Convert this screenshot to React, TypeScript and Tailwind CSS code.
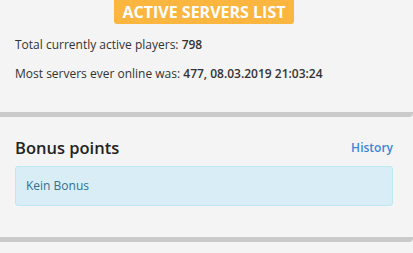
export default function App() {
  return (
    <div className="min-h-[253px] w-[413px] bg-[#f4f4f4] font-['Open_Sans',sans-serif] text-[#333]">
      <section className="h-[117px] border-b-[5px] border-[#cacaca] rounded-br-[4px] pl-[15px] pr-[20px] pb-[1px]">
        <div className="flex justify-center">
          <div className="w-[180px] h-[24px] flex items-center justify-center rounded-b-[3px] bg-[#fbb63f] text-white font-bold text-[16px] uppercase">
            Active servers list
          </div>
        </div>
        <p className="mt-[12px] text-[12px] leading-[17px]">
          Total currently active players: <b className="font-semibold">798</b>
        </p>
        <p className="mt-[12px] text-[12px] leading-[17px]">
          Most servers ever online was: <b className="font-semibold">477, 08.03.2019 21:03:24</b>
        </p>
      </section>
      <section className="mt-[1px] h-[124px] border-b-[5px] border-[#cacaca] rounded-br-[4px] pl-[15px] pr-[20px] pt-[18px]">
        <div className="flex items-center justify-between">
          <h2 className="text-[16.5px] font-semibold leading-[24px] text-[#222]">Bonus points</h2>
          <a className="text-[12px] font-semibold text-[#3d86d8]">History</a>
        </div>
        <div className="mt-[6px] h-[40px] flex items-center rounded-[3px] border border-[#bce8f1] bg-[#d9edf7] px-[10px] text-[12px] text-[#31708f]">
          Kein Bonus
        </div>
      </section>
    </div>
  );
}
